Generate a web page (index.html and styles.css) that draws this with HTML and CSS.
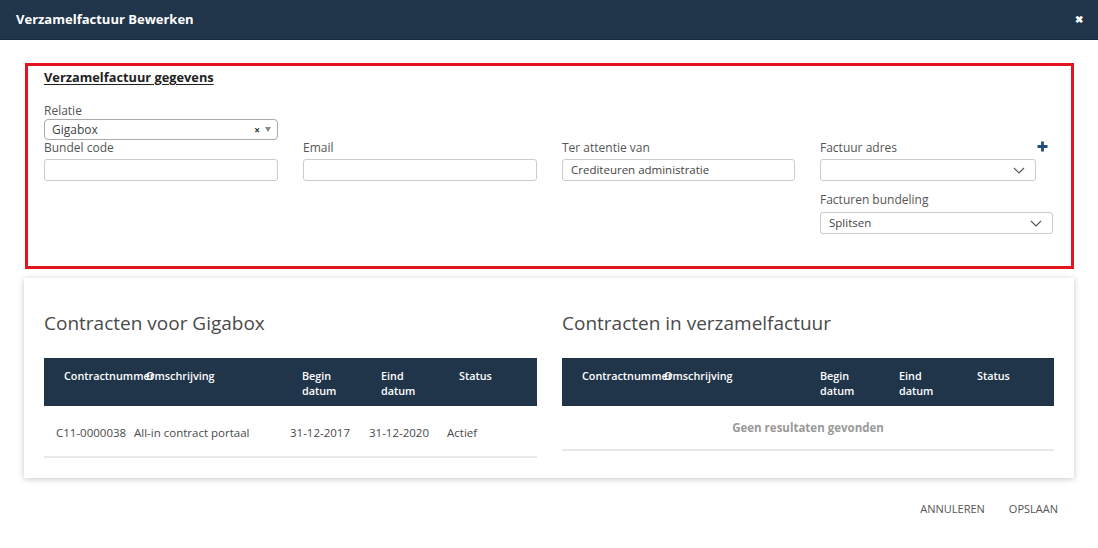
FILE: index.html
```html
<!DOCTYPE html>
<html lang="nl">
<head>
<meta charset="utf-8">
<title>Verzamelfactuur Bewerken</title>
<link rel="stylesheet" href="styles.css">
</head>
<body>
<header class="topbar">
  <span class="topbar-title">Verzamelfactuur Bewerken</span>
  <span class="topbar-close">&#x2716;</span>
</header>
<main class="content">
  <section class="form-box">
    <h2 class="form-title">Verzamelfactuur gegevens</h2>
    <div class="relatie">
      <label class="lbl">Relatie</label>
      <div class="select2">
        <span class="select2-text">Gigabox</span>
        <span class="select2-clear">×</span>
        <span class="select2-arrow"></span>
      </div>
    </div>
    <div class="grid">
      <div class="field">
        <label class="lbl lbl-row">Bundel code</label>
        <div class="input"></div>
      </div>
      <div class="field">
        <label class="lbl lbl-row">Email</label>
        <div class="input"></div>
      </div>
      <div class="field">
        <label class="lbl lbl-row">Ter attentie van</label>
        <div class="input">Crediteuren administratie</div>
      </div>
      <div class="field">
        <div class="adres-row">
          <div class="adres-field">
            <label class="lbl lbl-row">Factuur adres</label>
            <div class="input select">
              <span></span>
              <svg class="chev" width="12" height="7" viewBox="0 0 12 7"><path d="M1 1l5 5 5-5" fill="none" stroke="#555" stroke-width="1.1"/></svg>
            </div>
          </div>
          <svg class="plus" width="11" height="11" viewBox="0 0 11 11"><path d="M5.5 0.5v10M0.5 5.5h10" stroke="#1f4f7f" stroke-width="2.8"/></svg>
        </div>
        <label class="lbl lbl-second">Facturen bundeling</label>
        <div class="input select">
          <span>Splitsen</span>
          <svg class="chev" width="12" height="7" viewBox="0 0 12 7"><path d="M1 1l5 5 5-5" fill="none" stroke="#555" stroke-width="1.1"/></svg>
        </div>
      </div>
    </div>
  </section>

  <section class="card">
    <div class="panel">
      <h3 class="panel-title">Contracten voor Gigabox</h3>
      <table class="tbl">
        <colgroup><col class="c1"><col class="c2"><col class="c3"><col class="c4"><col></colgroup>
        <thead>
          <tr>
            <th class="h1">Contractnummer</th>
            <th>Omschrijving</th>
            <th>Begin<br>datum</th>
            <th>Eind<br>datum</th>
            <th>Status</th>
          </tr>
        </thead>
        <tbody>
          <tr class="row">
            <td>C11-0000038</td>
            <td>All-in contract portaal</td>
            <td>31-12-2017</td>
            <td>31-12-2020</td>
            <td>Actief</td>
          </tr>
        </tbody>
      </table>
    </div>
    <div class="panel">
      <h3 class="panel-title">Contracten in verzamelfactuur</h3>
      <table class="tbl">
        <colgroup><col class="c1"><col class="c2"><col class="c3"><col class="c4"><col></colgroup>
        <thead>
          <tr>
            <th class="h1">Contractnummer</th>
            <th>Omschrijving</th>
            <th>Begin<br>datum</th>
            <th>Eind<br>datum</th>
            <th>Status</th>
          </tr>
        </thead>
        <tbody>
          <tr class="empty">
            <td colspan="5">Geen resultaten gevonden</td>
          </tr>
        </tbody>
      </table>
    </div>
  </section>

  <div class="actions">
    <span class="btn">ANNULEREN</span>
    <span class="btn">OPSLAAN</span>
  </div>
</main>
</body>
</html>
```

FILE: styles.css
```css
* { box-sizing: border-box; }
body {
  margin: 0;
  font-family: "Open Sans", "Noto Sans", sans-serif;
  color: #444;
  background: #fff;
}
.topbar {
  height: 40px;
  background: #21354a;
  color: #fff;
  display: flex;
  align-items: center;
  justify-content: space-between;
  padding: 0 16px 2px 16px;
  border-bottom: 1px solid #17293a;
}
.topbar-title {
  font-size: 13px;
  font-weight: 700;
}
.topbar-close {
  font-size: 10px;
  font-weight: 700;
  margin-right: -1px;
}
.content {
  padding: 23px 24px 0 24px;
}
.form-box {
  margin-left: 1px;
  border: 3px solid #e2141e;
  padding: 2px 19px 32px 16px;
}
.form-title {
  margin: 0;
  font-size: 12.8px;
  line-height: 18px;
  font-weight: 700;
  color: #222;
  text-decoration: underline;
  text-underline-offset: 2px;
}
.relatie {
  margin-top: 17px;
  width: 234px;
}
.lbl {
  display: block;
  font-size: 12px;
  line-height: 16px;
  color: #555;
}
.select2 {
  height: 21px;
  border: 1px solid #aaa;
  border-radius: 4px;
  display: flex;
  align-items: center;
  padding: 0 6px 0 7px;
  font-size: 12px;
  color: #444;
}
.select2-text { flex: 1; }
.select2-clear {
  font-size: 10px;
  font-weight: 700;
  color: #333;
  margin-right: 5px;
}
.select2-arrow {
  width: 0;
  height: 0;
  border-left: 3.5px solid transparent;
  border-right: 3.5px solid transparent;
  border-top: 5px solid #888;
}
.grid {
  display: grid;
  grid-template-columns: 234px 234px 233px 233px;
  column-gap: 25px;
  align-items: start;
}
.lbl-row {
  margin-bottom: 3px;
}
.lbl-second {
  margin-top: 11px;
  margin-bottom: 4px;
}
.input {
  height: 22px;
  border: 1px solid #ccc;
  border-radius: 3px;
  font-size: 11.5px;
  line-height: 20px;
  padding: 0 10px 0 8px;
  color: #444;
}
.select {
  display: flex;
  align-items: center;
  justify-content: space-between;
  font-size: 11.5px;
}
.adres-row {
  display: flex;
  align-items: flex-start;
}
.adres-field {
  width: 216px;
}
.plus {
  margin: 1px 0 0 1px;
}
.card {
  margin-top: 9px;
  background: #fff;
  box-shadow: 0 1px 6px rgba(0, 0, 0, 0.22);
  display: grid;
  grid-template-columns: 493px 492px;
  column-gap: 25px;
  padding: 32px 20px 20px 20px;
}
.panel-title {
  margin: 0 0 21px 0;
  font-size: 19px;
  line-height: 27px;
  font-weight: 400;
  color: #4a4a4a;
}
.tbl {
  width: 100%;
  border-collapse: collapse;
  table-layout: fixed;
}
.c1 { width: 78px; }
.c2 { width: 156px; }
.c3 { width: 79px; }
.c4 { width: 78px; }
.tbl thead tr {
  background: #21354a;
  height: 48px;
}
.tbl th {
  text-align: left;
  vertical-align: top;
  font-size: 10.8px;
  line-height: 15px;
  font-weight: 600;
  color: #fff;
  padding: 10px 0 0 24px;
  white-space: nowrap;
  overflow: visible;
}
.tbl th.h1 { padding-left: 20px; }
.row td {
  height: 51px;
  font-size: 11.5px;
  color: #4a4a4a;
  padding: 3px 0 0 12px;
  white-space: nowrap;
  border-bottom: 2px solid #e8e8e8;
}
.empty td {
  height: 44px;
  text-align: center;
  font-size: 11.5px;
  font-weight: 700;
  color: #999;
  border-bottom: 2px solid #e8e8e8;
  padding-bottom: 2px;
}
.actions {
  display: flex;
  justify-content: flex-end;
  gap: 24px;
  margin-top: 23px;
  padding-right: 16px;
}
.btn {
  font-size: 11px;
  line-height: 16px;
  color: #555;
}
```
